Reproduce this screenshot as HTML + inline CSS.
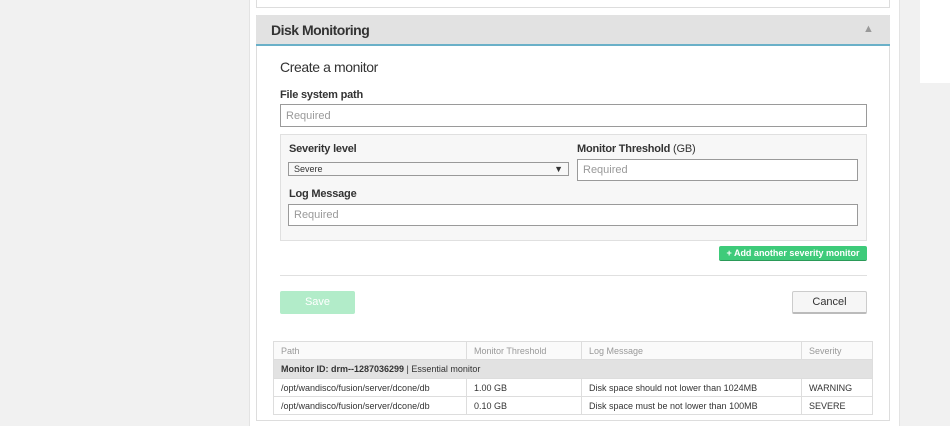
<!DOCTYPE html>
<html><head><style>
*{box-sizing:border-box;margin:0;padding:0}
body{width:950px;height:426px;overflow:hidden;background:#f1f1f1;font-family:"Liberation Sans",Arial,sans-serif;position:relative;color:#333}
.a{position:absolute}
.inp{position:absolute;background:#fff;border:1px solid #9a9a9a;font-size:11px;color:#999;padding-left:5px;display:flex;align-items:center}
.lbl{position:absolute;font-size:11px;font-weight:bold;color:#333;letter-spacing:-0.2px}
table{border-collapse:collapse;font-size:9px}
td{border:1px solid #ddd;padding:0 7px;height:18px;white-space:nowrap}
</style></head><body>
<div class="a" style="left:249px;top:0;width:651px;height:426px;background:#fff;border-left:1px solid #e3e3e3;border-right:1px solid #e3e3e3"></div>
<div class="a" style="left:900px;top:0;width:20px;height:426px;background:#f1f1f1"></div>
<div class="a" style="left:920px;top:0;width:30px;height:83px;background:#fff"></div>
<div class="a" style="left:256px;top:0;width:634px;height:8px;border:1px solid #ddd;border-top:none;background:#fff"></div>
<div class="a" style="left:256px;top:15px;width:634px;height:406px;border:1px solid #ddd;border-top:none;background:#fff"></div>
<div class="a" style="left:256px;top:15px;width:634px;height:31px;background:#e2e2e2;border-bottom:2px solid #6ab0c8;border-radius:2px 2px 0 0"></div>
<div class="a" style="left:271px;top:22px;font-size:14px;font-weight:bold;color:#333;letter-spacing:-0.5px">Disk Monitoring</div>
<div class="a" style="left:863px;top:23px;font-size:11px;color:#999">▲</div>
<div class="a" style="left:280px;top:59px;font-size:14px;color:#333;letter-spacing:-0.4px">Create a monitor</div>
<div class="lbl" style="left:280px;top:89px">File system path</div>
<div class="inp" style="left:280px;top:104px;width:587px;height:23px">Required</div>
<div class="a" style="left:280px;top:134px;width:587px;height:107px;background:#f7f7f7;border:1px solid #e0e0e0"></div>
<div class="lbl" style="left:289px;top:143px">Severity level</div>
<div class="a" style="left:288px;top:162px;width:281px;height:14px;background:#f7f7f7;border:1px solid #999;font-size:9px;padding-left:5px;line-height:12px;color:#333">Severe<span style="position:absolute;right:5px;font-size:9px">▼</span></div>
<div class="lbl" style="left:577px;top:143px">Monitor Threshold <span style="font-weight:normal">(GB)</span></div>
<div class="inp" style="left:577px;top:159px;width:281px;height:22px">Required</div>
<div class="lbl" style="left:289px;top:188px">Log Message</div>
<div class="inp" style="left:288px;top:204px;width:570px;height:22px">Required</div>
<div class="a" style="left:719px;top:246px;width:148px;height:15px;background:#3ecb7a;border-radius:2px;border-bottom:1px solid #2a9a58;color:#fff;font-size:9px;font-weight:bold;text-align:center;line-height:14px">+ Add another severity monitor</div>
<div class="a" style="left:280px;top:275px;width:587px;height:1px;background:#e0e0e0"></div>
<div class="a" style="left:280px;top:291px;width:75px;height:23px;background:#b2ecc9;border-radius:2px;color:#fff;font-size:11px;text-align:center;line-height:23px">Save</div>
<div class="a" style="left:792px;top:291px;width:75px;height:23px;background:#f6f6f6;border:1px solid #ccc;border-bottom:2px solid #bbb;border-radius:2px;color:#333;font-size:11px;text-align:center;line-height:20px">Cancel</div>
<table class="a" style="left:273px;top:341px;width:600px">
<tr style="color:#999;background:#fafafa"><td style="width:193px">Path</td><td style="width:115px">Monitor Threshold</td><td style="width:220px">Log Message</td><td>Severity</td></tr>
<tr style="background:#e2e2e2"><td colspan="4" style="height:19px"><b>Monitor ID: drm--1287036299</b> | Essential monitor</td></tr>
<tr><td>/opt/wandisco/fusion/server/dcone/db</td><td>1.00 GB</td><td>Disk space should not lower than 1024MB</td><td>WARNING</td></tr>
<tr><td>/opt/wandisco/fusion/server/dcone/db</td><td>0.10 GB</td><td>Disk space must be not lower than 100MB</td><td>SEVERE</td></tr>
</table>
</body></html>
